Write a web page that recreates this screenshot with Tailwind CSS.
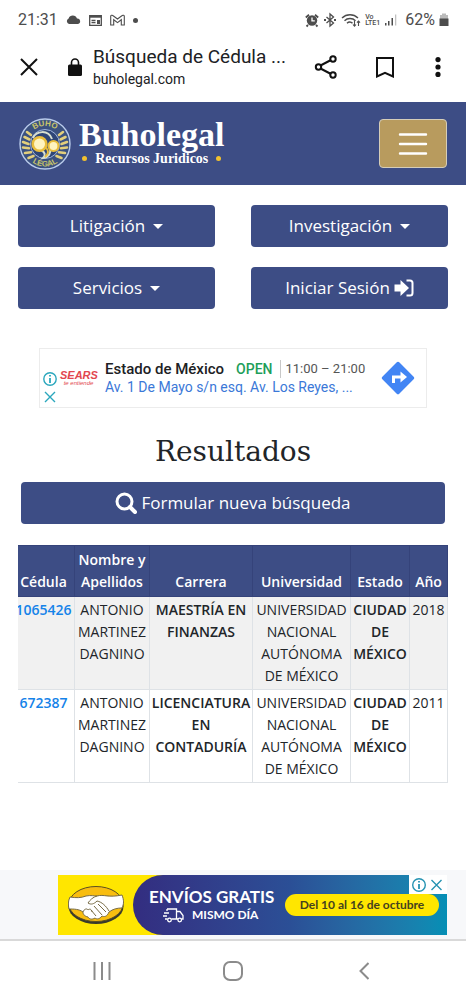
<!doctype html>
<html lang="es">

<head>
  <meta charset="UTF-8" />
  <meta name="viewport" content="width=device-width, initial-scale=1.0" />
  <title>Búsqueda de Cédula | Buholegal</title>
  <script src="https://cdn.jsdelivr.net/npm/@tailwindcss/browser@4"></script>
</head>

<body class="flex min-h-screen flex-col bg-white font-['Open_Sans',sans-serif] text-[#212529]">
  <!-- Status bar -->
  <div class="flex h-10 items-center justify-between pl-[18px] pr-[17px] font-[Roboto,sans-serif] text-[16px] text-[#4d4d4d]">
    <div class="flex items-center gap-2">
      <span>21:31</span>
      <svg class="h-4 w-[15px]" viewBox="0 0 15 16" fill="currentColor"><path d="M3 12a3 3 0 0 1-.4-5.600A4.500 4.500 0 0 1 11 6.500a2.800 2.800 0 0 1 1 5.500z" /></svg>
      <svg class="h-4 w-[13px]" viewBox="0 0 13 16" fill="none" stroke="currentColor" stroke-width="1.300"><path d="M.7 3.700h11.600v9.600H.7z" /><path d="M.7 4.500h11.600" stroke-width="2.400" /><path d="M2.500 8.500h4M2.500 10.700h4" /><path d="M8 8h3v4H8z" fill="currentColor" stroke="none" /></svg>
      <svg class="h-4 w-[15px]" viewBox="0 0 15 16" fill="none" stroke="currentColor" stroke-width="1.100"><path d="M.7 13V4.200c0-1 1.400-1.300 2.100-.7L7.500 7l4.700-3.500c.7-.6 2.100-.3 2.100.7V13h-3V7.700L7.500 10.600 3.700 7.700V13z" /></svg>
      <span class="h-[5px] w-[5px] rounded-full bg-[#4d4d4d]"></span>
    </div>
    <div class="flex items-center gap-1">
      <svg class="h-4 w-[14px]" viewBox="0 0 14 16"><circle cx="7" cy="8.500" r="5.200" fill="currentColor" /><path d="M.8 5.500 4 2.800M13.200 5.500 10 2.800M3 13l-1.500 1.500M11 13l1.500 1.500" stroke="currentColor" stroke-width="1.800" /><path d="M7 5.500v3.300h2.800" fill="none" stroke="#fff" stroke-width="1.300" /></svg>
      <svg class="h-4 w-[14px]" viewBox="0 0 14 16" fill="none" stroke="currentColor" stroke-width="1.300"><path d="m3.500 5 7 6L7 14V2l3.500 3-7 6" /><path d="M1 8h2M11 8h2" stroke-width="2" /></svg>
      <svg class="h-4 w-[20px]" viewBox="0 0 20 16" fill="none" stroke="currentColor" stroke-width="1.400"><path d="M1 6c4.500-4.300 11.500-4.300 16 0M3.500 8.700c3-3 8-3 11 0M6 11.200c1.700-1.700 4-1.700 5.500 0" /><path d="M13.500 9v5M12 12.500l1.500 1.700 1.500-1.700M17.500 14V9M16 10.700 17.500 9l1.500 1.700" stroke-width="1.100" /></svg>
      <span class="text-[7px] leading-[6px] font-medium">Vo<br />LTE1</span>
      <svg class="h-4 w-[13px]" viewBox="0 0 13 16" fill="currentColor"><path d="M1 11h1.500v2.500H1zM4 9h1.500v4.500H4zM7.500 6H9v7.500H7.500z" /><path d="M11 2.500h1.300v11H11z" opacity=".35" /></svg>
      <span class="ml-1">62%</span>
      <svg class="h-4 w-[10px]" viewBox="0 0 10 16"><path d="M3 1.500h4V3h2v4H1V3h2z" fill="#bbb" /><path d="M.5 6.500h9v7.500h-9z" fill="currentColor" /></svg>
    </div>
  </div>

  <!-- Browser toolbar -->
  <div class="flex h-[62px] items-center pr-[25px] pl-[20px] pb-2 font-[Roboto,sans-serif] text-[#202124]">
    <button type="button" aria-label="Cerrar">
      <svg class="h-[18px] w-[18px]" viewBox="0 0 18 18" stroke="#111" stroke-width="2"><path d="m1 1 16 16M17 1 1 17" /></svg>
    </button>
    <svg class="ml-[30px] h-[18px] w-[14px]" viewBox="0 0 14 18"><rect y="6.500" width="14" height="11.500" rx="1.500" fill="#111" /><path d="M3.500 7V4.500a3.500 3.500 0 0 1 7 0V7" fill="none" stroke="#111" stroke-width="1.600" /></svg>
    <div class="ml-[11px] min-w-0 flex-1">
      <p class="truncate text-[19px] leading-6">Búsqueda de Cédula ...</p>
      <p class="text-[14px] leading-5">buholegal.com</p>
    </div>
    <div class="flex items-center">
      <button type="button" aria-label="Compartir">
        <svg class="h-6 w-6" viewBox="0 0 24 24" fill="none" stroke="#111" stroke-width="2"><path d="M6.500 10.500 17 5M6.500 13.500 17 19" /><circle cx="4.500" cy="12" r="2.700" /><circle cx="19" cy="4" r="2.700" /><circle cx="19" cy="20" r="2.700" /></svg>
      </button>
      <button type="button" aria-label="Guardar" class="ml-[38px]">
        <svg class="h-[22px] w-[18px]" viewBox="0 0 18 22" fill="none" stroke="#111" stroke-width="2"><path d="M1 2h16v18.500l-8-3.700-8 3.700z" /></svg>
      </button>
      <button type="button" aria-label="Más opciones" class="ml-[41px]">
        <svg class="h-5 w-[6px]" viewBox="0 0 6 20" fill="#111"><circle cx="3" cy="2.600" r="2.600" /><circle cx="3" cy="10" r="2.600" /><circle cx="3" cy="17.400" r="2.600" /></svg>
      </button>
    </div>
  </div>

  <!-- Site header -->
  <header class="flex h-[83px] items-center justify-between bg-[#3d4d85] px-[19px]">
    <a href="#" class="flex items-center gap-2 font-['Liberation_Serif',serif] font-bold text-white">
      <svg class="h-[52px] w-[52px]" viewBox="0 0 52 52">
        <defs>
          <path id="arcTop" d="M8 26a18 18 0 0 1 36 0" />
          <path id="arcBottom" d="M3.500 26a22.500 22.500 0 0 0 45 0" />
        </defs>
        <circle cx="26" cy="26" r="25" fill="#3b5180" stroke="#b9cbea" stroke-width="1.400" />
        <g fill="none" stroke="#e3cf7c" stroke-width="2.600" stroke-linecap="round">
          <path d="m8 14 4 3M5.500 19l5 2.500M4 24l5.500 2M4 29.500l6 .8M6 35l6-.8M9.500 40l5-2" />
          <path d="m44 14-4 3M46.500 19l-5 2.500M48 24l-5.500 2M48 29.500l-6 .8M46 35l-6-.8M42.500 40l-5-2" />
        </g>
        <circle cx="26" cy="26" r="14.500" fill="#2f4677" stroke="#9fb4dc" />
        <path d="M14 20c3-7 15-9 19 1M22 32c4 2 5 5 2 8 6-1 8-5 7-9" fill="none" stroke="#d9e0d0" stroke-width="2" />
        <circle cx="20.500" cy="26" r="6.800" fill="#fff3c0" stroke="#e9bd3d" stroke-width="2.600" />
        <circle cx="34.500" cy="28" r="5" fill="#fff3c0" stroke="#e9bd3d" stroke-width="2.200" />
        <path d="M26 29c4 3 4 7 0 10" fill="none" stroke="#e9bd3d" stroke-width="2" />
        <g fill="#c9c46a" font-family="Liberation Sans, sans-serif" font-size="8" font-weight="700" text-anchor="middle">
          <text><textPath href="#arcTop" startOffset="50%">BUHO</textPath></text>
          <text><textPath href="#arcBottom" startOffset="50%">LEGAL</textPath></text>
        </g>
      </svg>
      <div>
        <p class="text-[34px] leading-[30px]">Buholegal</p>
        <p class="flex items-center justify-center gap-2 text-[14px] leading-[18px]">
          <span class="h-[5px] w-[5px] rounded-full bg-[#f2c12e]"></span>
          Recursos Juridicos
          <span class="h-[5px] w-[5px] rounded-full bg-[#f2c12e]"></span>
        </p>
      </div>
    </a>
    <button type="button" aria-label="Menú" class="flex h-[49px] w-[68px] items-center justify-center rounded border border-[#d5cdb9] bg-[#b89b5e]">
      <svg class="h-6 w-[30px]" viewBox="0 0 30 24" stroke="#fff" stroke-width="2.400" stroke-linecap="round"><path d="M2 2.500h26M2 12h26M2 21.500h26" /></svg>
    </button>
  </header>

  <main class="flex-1 px-[18px] pt-5">
    <nav class="grid grid-cols-2 gap-x-9 gap-y-5 text-[17px] text-white">
      <button type="button" class="flex h-[42px] items-center justify-center gap-2 rounded bg-[#3d4d85]">Litigación <span class="border-x-[5px] border-t-[5px] border-x-transparent border-t-white"></span></button>
      <button type="button" class="flex h-[42px] items-center justify-center gap-2 rounded bg-[#3d4d85]">Investigación <span class="border-x-[5px] border-t-[5px] border-x-transparent border-t-white"></span></button>
      <button type="button" class="flex h-[42px] items-center justify-center gap-2 rounded bg-[#3d4d85]">Servicios <span class="border-x-[5px] border-t-[5px] border-x-transparent border-t-white"></span></button>
      <a href="#" class="flex h-[42px] items-center justify-center gap-1 rounded bg-[#3d4d85]">Iniciar Sesión
        <svg class="h-5 w-5" viewBox="0 0 20 20"><path d="M.5 6.500h6V2l8.500 8-8.500 8v-4.500h-6z" fill="#fff" /><path d="M12.500 2.500H16a2.500 2.500 0 0 1 2.500 2.500v10a2.500 2.500 0 0 1-2.500 2.500h-3.500" fill="none" stroke="#fff" stroke-width="2" /></svg>
      </a>
    </nav>

    <!-- Ad -->
    <a href="#" class="mx-[21px] mt-[39px] flex h-[60px] items-center border border-[#ececec] pr-[11px] pl-[3px] font-[Roboto,sans-serif] text-[14px] leading-[18px]">
      <svg class="mt-5 h-[34px] w-[14px]" viewBox="0 0 14 34" fill="none" stroke="#2ba7bd" stroke-width="1.400"><circle cx="7" cy="8" r="6.200" /><path d="M7 7v5M7 4v1.600" stroke-width="1.800" /><path d="m2 21 10 10M12 21 2 31" /></svg>
      <div class="ml-[3px] w-[37px] text-center font-['Liberation_Sans',sans-serif] text-[#e2474f] italic">
        <p class="text-[11px] leading-[10px] font-bold">SEARS</p>
        <p class="text-[6px] leading-[6px]">te entiende</p>
      </div>
      <div class="ml-2 min-w-0 flex-1">
        <p class="flex whitespace-nowrap"><span class="text-[15px] font-medium text-[#202124]">Estado de México</span><span class="ml-3 font-medium text-[#1e9e5a]">OPEN</span><span class="ml-2 border-l border-[#c8c8c8] pl-1 text-[13px] text-[#555]">11:00 – 21:00</span></p>
        <p class="whitespace-nowrap text-[#3b78d8]">Av. 1 De Mayo s/n esq. Av. Los Reyes, ...</p>
      </div>
      <svg class="h-[34px] w-[34px]" viewBox="0 0 34 34"><path d="M15.500 1.600a2 2 0 0 1 3 0l13.900 13.900a2 2 0 0 1 0 3L18.500 32.400a2 2 0 0 1-3 0L1.600 18.500a2 2 0 0 1 0-3z" fill="#4285f4" /><path d="M12.500 22v-6h9" fill="none" stroke="#fff" stroke-width="3" /><path d="m19.500 10.500 6.500 5.500-6.500 5.500z" fill="#fff" /></svg>
    </a>

    <h1 class="mt-[26px] text-center font-['DejaVu_Serif',serif] text-[28px] leading-9">Resultados</h1>
    <button type="button" class="mx-[3px] mt-3 flex h-[42px] w-[calc(100%-6px)] items-center justify-center gap-1 rounded bg-[#3d4d85] text-[17px] text-white">
      <svg class="h-[22px] w-[22px]" viewBox="0 0 22 22" fill="none" stroke="#fff" stroke-width="3"><circle cx="9.500" cy="9.500" r="7.500" /><path d="m15 15 5 5" stroke-width="4" stroke-linecap="round" /></svg>
      Formular nueva búsqueda
    </button>

    <div class="mt-[21px] flex justify-end overflow-hidden">
      <table class="w-[436px] shrink-0 table-fixed border-collapse text-center text-[14px] leading-[22px]">
        <colgroup>
          <col class="w-[62px]" />
          <col class="w-[75px]" />
          <col class="w-[103px]" />
          <col class="w-[98px]" />
          <col class="w-[59px]" />
          <col class="w-[38px]" />
        </colgroup>
        <thead class="bg-[#3d4d85] align-bottom text-[15px] text-white">
          <tr>
            <th class="border border-[#35437a] py-[3px] text-[14px] font-semibold">Cédula</th>
            <th class="border border-[#35437a] py-[3px] text-[14px] font-semibold">Nombre y Apellidos</th>
            <th class="border border-[#35437a] py-[3px] text-[14px] font-semibold">Carrera</th>
            <th class="border border-[#35437a] py-[3px] text-[14px] font-semibold">Universidad</th>
            <th class="border border-[#35437a] py-[3px] text-[14px] font-semibold">Estado</th>
            <th class="border border-[#35437a] py-[3px] text-[14px] font-semibold">Año</th>
          </tr>
        </thead>
        <tbody class="align-top">
          <tr class="bg-[#f1f1f1]">
            <td class="border border-[#dee2e6] py-[2px] font-semibold"><a href="#" class="text-[#1583e9]">1065426</a></td>
            <td class="border border-[#dee2e6] py-[2px]">ANTONIO MARTINEZ DAGNINO</td>
            <td class="border border-[#dee2e6] py-[2px] font-semibold">MAESTRÍA EN FINANZAS</td>
            <td class="border border-[#dee2e6] py-[2px]">UNIVERSIDAD NACIONAL AUTÓNOMA DE MÉXICO</td>
            <td class="border border-[#dee2e6] py-[2px] font-semibold">CIUDAD DE MÉXICO</td>
            <td class="border border-[#dee2e6] py-[2px]">2018</td>
          </tr>
          <tr>
            <td class="border border-[#dee2e6] py-[2px] font-semibold"><a href="#" class="text-[#1583e9]">672387</a></td>
            <td class="border border-[#dee2e6] py-[2px]">ANTONIO MARTINEZ DAGNINO</td>
            <td class="border border-[#dee2e6] py-[2px] font-semibold">LICENCIATURA EN CONTADURÍA</td>
            <td class="border border-[#dee2e6] py-[2px]">UNIVERSIDAD NACIONAL AUTÓNOMA DE MÉXICO</td>
            <td class="border border-[#dee2e6] py-[2px] font-semibold">CIUDAD DE MÉXICO</td>
            <td class="border border-[#dee2e6] py-[2px]">2011</td>
          </tr>
        </tbody>
      </table>
    </div>
  </main>

  <!-- Anchored ad -->
  <aside class="border-b-2 border-[#d9d9d9] bg-[#f7f8fa] pt-[5px] pr-[19px] pb-1 pl-[58px]">
    <a href="#" class="relative flex h-[60px] bg-[#ffe600] font-[Lato,sans-serif]">
      <span class="flex w-[75px] items-center justify-center">
        <svg class="h-10 w-[56px]" viewBox="0 0 56 40">
          <ellipse cx="28" cy="21.500" rx="27.500" ry="17.500" fill="#3a3a2c" />
          <ellipse cx="28" cy="19" rx="27" ry="17.500" fill="#f8bd10" stroke="#5b5020" />
          <path d="M2 12c6 1 11 1 16-1 5-1 8 0 11 0 7-2 11 2 25-1 2 5 2 9 0 13-5 0-9 1-13 4-2 5-5 5-7 4-3 4-6 3-7 2-3 2-6 1-7-1-4-1-5-3-5-5-4-3-9-3-14-3-1-4-1-8 1-12z" fill="#fff" stroke="#776b45" />
          <path d="M29 11c-4 1-7 4-9 7 3 2 6 1 9-2 5 1 9 5 12 10M26 21l8 9M23 25l5 6M30 19l8 8M15 27c1-3 4-4 5-2 2-2 4 0 4 2" fill="none" stroke="#776b45" />
        </svg>
      </span>
      <span class="flex flex-1 items-center rounded-l-[30px] bg-linear-to-r from-[#332d80] via-[#2b4f96] to-[#048fb5] pl-4 text-white">
        <span class="w-[130px]">
          <span class="block text-[17px] leading-[20px] font-bold whitespace-nowrap">ENVÍOS GRATIS</span>
          <span class="flex items-center gap-2 pl-[14px] text-[12px] leading-4 font-bold whitespace-nowrap">
            <svg class="h-4 w-[21px]" viewBox="0 0 21 16" fill="none" stroke="#fff" stroke-width="1.300"><path d="M4 2h9.500v10H8.500M4 2v2M1 6h5M0 9h4M2 12h2.500M13.500 4.500H17l3 4V12h-1.500M15 12h-2" /><circle cx="6.500" cy="13" r="1.800" /><circle cx="16.700" cy="13" r="1.800" /></svg>
            MISMO DÍA
          </span>
        </span>
        <span class="ml-[6px] flex h-[22px] w-[154px] items-center justify-center rounded-full bg-[#ffe600] text-[12px] font-bold whitespace-nowrap text-[#45411f]">Del 10 al 16 de octubre</span>
      </span>
      <svg class="absolute top-0 right-0 h-[19px] w-[38px]" viewBox="0 0 38 19" fill="none" stroke="#2593b2" stroke-width="1.400"><path d="M0 0h38v19H0z" fill="#fff" stroke="none" /><circle cx="10" cy="10" r="6.300" /><path d="M10 9v5M10 6v1.600" stroke-width="1.800" /><path d="m22.500 5 10 10M32.500 5l-10 10" /></svg>
    </a>
  </aside>

  <!-- Navigation bar -->
  <nav class="grid h-[59px] grid-cols-3 items-center px-[37px]">
    <button type="button" aria-label="Recientes" class="flex justify-center"><svg class="h-[18px] w-[18px]" viewBox="0 0 18 18" stroke="#8b8b8b" stroke-width="2"><path d="M1.500 0v18M9 0v18M16.500 0v18" /></svg></button>
    <button type="button" aria-label="Inicio" class="flex justify-center"><svg class="h-5 w-5" viewBox="0 0 20 20" fill="none" stroke="#8b8b8b" stroke-width="2"><rect x="1" y="1" width="18" height="18" rx="6" /></svg></button>
    <button type="button" aria-label="Atrás" class="flex justify-center"><svg class="h-[18px] w-[10px]" viewBox="0 0 10 18" fill="none" stroke="#8b8b8b" stroke-width="2"><path d="M9.500 1 1.500 9l8 8" /></svg></button>
  </nav>
</body>

</html>
